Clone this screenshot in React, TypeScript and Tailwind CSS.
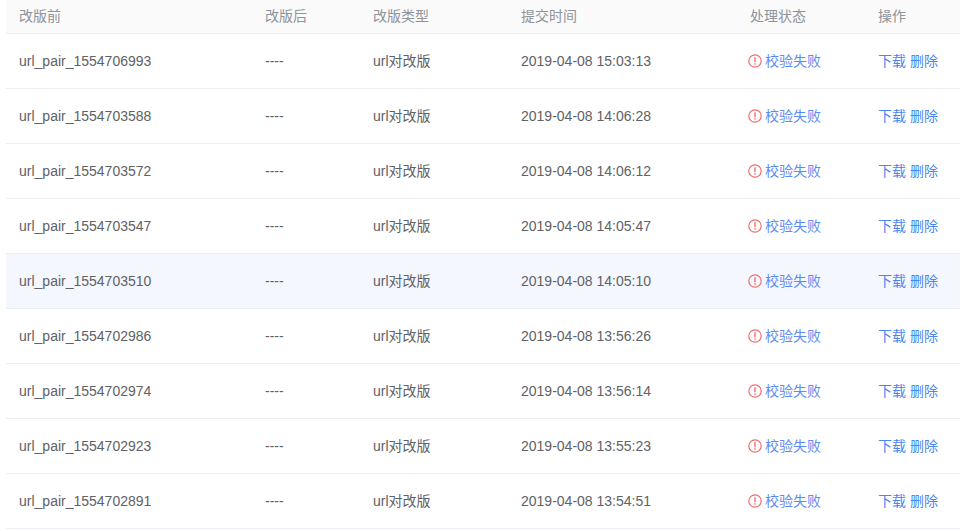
const rows = [
  ["url_pair_1554706993", "2019-04-08 15:03:13"],
  ["url_pair_1554703588", "2019-04-08 14:06:28"],
  ["url_pair_1554703572", "2019-04-08 14:06:12"],
  ["url_pair_1554703547", "2019-04-08 14:05:47"],
  ["url_pair_1554703510", "2019-04-08 14:05:10"],
  ["url_pair_1554702986", "2019-04-08 13:56:26"],
  ["url_pair_1554702974", "2019-04-08 13:56:14"],
  ["url_pair_1554702923", "2019-04-08 13:55:23"],
  ["url_pair_1554702891", "2019-04-08 13:54:51"],
];

function Warn() {
  return (
    <svg width="14" height="14" viewBox="0 0 14 14" className="mr-[3px]">
      <circle cx="7" cy="7" r="6.2" fill="none" stroke="#f56c6c" strokeWidth="1.2" />
      <rect x="6.3" y="3.3" width="1.4" height="4.8" fill="#f56c6c" />
      <rect x="6.3" y="9.2" width="1.4" height="1.5" fill="#f56c6c" />
    </svg>
  );
}

export default function App() {
  const cols = "grid grid-cols-[246px_108px_148px_229px_128px_1fr] items-center pl-[13px]";
  return (
    <div className="w-[964px] h-[531px] bg-white overflow-hidden pl-[6px] pr-[4px] text-[14px]" style={{ fontFamily: '"Liberation Sans", "Noto Sans CJK SC", sans-serif' }}>
      <div className={`${cols} h-[34px] bg-[#fafafa] border-b border-[#ebeef5] text-[#909399]`}>
        <div>改版前</div><div>改版后</div><div>改版类型</div><div>提交时间</div><div>处理状态</div><div>操作</div>
      </div>
      {rows.map(([name, time], i) => (
        <div key={i} className={`${cols} h-[55px] border-b border-[#ebeef5] text-[#606266] ${i === 4 ? "bg-[#f5f7ff]" : ""}`}>
          <div>{name}</div>
          <div>----</div>
          <div>url对改版</div>
          <div>{time}</div>
          <div className="flex items-center -ml-[2px] text-[#5b8cf5]"><Warn />校验失败</div>
          <div className="text-[#4a86f0]">下载 删除</div>
        </div>
      ))}
    </div>
  );
}
